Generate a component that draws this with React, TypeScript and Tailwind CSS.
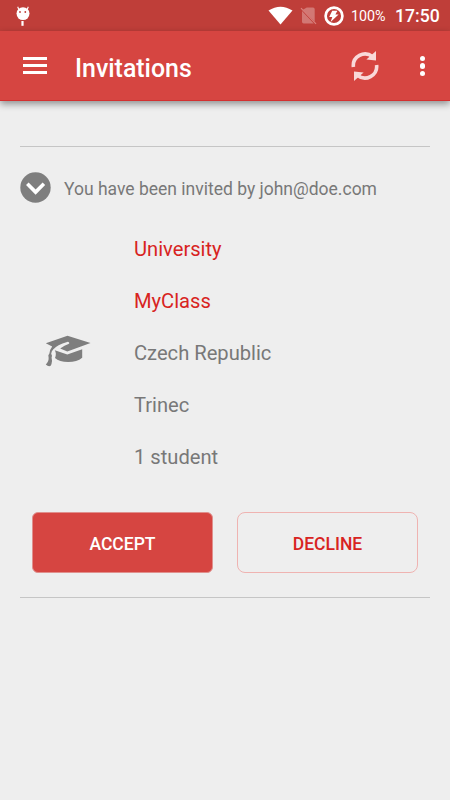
const StatusBar = () => {
  return (
    <div className="flex h-[31px] items-center bg-[#bf3e39] pr-[10px] pl-4 text-white">
      <svg width="14" height="20" viewBox="0 0 14 20" fill="currentColor">
        <path
          d="M2.8 3.5 1.7.8M11.2 3.5 12.3.8"
          stroke="currentColor"
          strokeWidth="1.1"
        />
        <ellipse cx="7" cy="7.6" rx="6.5" ry="6.4" />
        <rect x="5.4" y="15" width="2.2" height="4.8" />
        <circle cx="4" cy="6" r=".9" fill="#bf3e39" />
        <circle cx="9.3" cy="6" r=".9" fill="#bf3e39" />
      </svg>
      <div className="ml-auto flex items-center">
        <svg width="25" height="19" viewBox="0 0 25 19" fill="currentColor">
          <path d="M.5 4.6Q12.5-3.2 24.5 4.6L12.5 18.6Z" />
        </svg>
        <svg className="ml-[7px]" width="17" height="19" viewBox="0 0 17 19">
          <path
            d="M6.8 1.5H13q1.7 0 1.7 1.7v12.2L2.8 3.8ZM2 5v10.8q0 1.7 1.7 1.7h10.1Z"
            fill="#fff"
            opacity=".3"
          />
          <path d="m1 2.2 15 15.6" stroke="#d9807c" strokeWidth="1.2" />
        </svg>
        <svg className="ml-[7px]" width="20" height="20" viewBox="0 0 20 20">
          <circle
            cx="10"
            cy="10"
            r="8.4"
            fill="none"
            stroke="#fff"
            strokeWidth="2.7"
          />
          <path d="M8.2 4.8h5.2l-2 3.6h3.2L6.6 16l1.7-4.9H5.2Z" fill="#fff" />
        </svg>
        <span className="ml-[7px] w-9 pt-0.5 text-[14.3px] leading-none">
          100%
        </span>
        <span className="ml-2 w-[45px] pt-[3px] text-[17.6px] leading-none font-medium">
          17:50
        </span>
      </div>
    </div>
  );
};

const Header = () => {
  return (
    <header className="flex h-[70px] items-center border-b border-[#d32f2f] bg-[#d64541] pl-[23px] text-white shadow-[0_3px_7px_rgba(0,0,0,0.4)]">
      <div className="flex w-6 flex-col gap-1">
        <div className="h-[3px] bg-white" />
        <div className="h-[3px] bg-white" />
        <div className="h-[3px] bg-white" />
      </div>
      <h1 className="ml-7 pt-1.5 text-[24.9px] leading-8 font-medium">
        Invitations
      </h1>
      <svg
        className="mt-px ml-auto"
        width="28"
        height="32"
        viewBox="0 0 28 32"
        fill="#f9d9d9"
      >
        <g fill="none" stroke="#f9d9d9" strokeWidth="3.6">
          <path d="M2.4 17A11.7 11.7 0 0 1 21.5 6.7" />
          <path d="M25.6 15A11.7 11.7 0 0 1 6.5 25.3" />
        </g>
        <path d="M25 1v9.5L15.4 9.5Z" />
        <path d="M3 31v-9.5l9.6 1Z" />
      </svg>
      <div className="mt-px mr-[25px] ml-[41px] flex flex-col gap-[2.3px]">
        <div className="size-[5.2px] rounded-full bg-white" />
        <div className="size-[5.2px] rounded-full bg-white" />
        <div className="size-[5.2px] rounded-full bg-white" />
      </div>
    </header>
  );
};

const Invitation = () => {
  return (
    <section className="mx-5 mt-[45px] h-[452px] border-y border-[#c5c5c5]">
      <div className="flex h-14 items-center pt-[25px]">
        <svg width="31" height="31" viewBox="0 0 31 31">
          <circle cx="15.5" cy="15.5" r="15.2" fill="#7e7e7e" />
          <path
            d="m7.3 11.8 8.3 8.3 8.3-8.3"
            fill="none"
            stroke="#fff"
            strokeWidth="3.6"
          />
        </svg>
        <p className="ml-[13px] pt-0.5 text-[17.5px] leading-6 whitespace-nowrap">
          You have been invited by john@doe.com
        </p>
      </div>

      <div className="mt-5 flex items-center">
        <svg
          className="mr-[43px] mb-1 ml-[25px]"
          width="46"
          height="32"
          viewBox="0 0 46 32"
          fill="#7e7e7e"
        >
          <path d="M.8 8.2 22.5.8 45.5 8 22.3 16.6 15.2 13.6q4.5-3.3 8.3-4.5 1.2-.6.6-1.7-.8-.9-2-.5Q12.2 9.6 8.1 14.5q-1.7 1.9-1.9 4.2 1.4 1.9.4 3.9.9 4.1-.1 6.3-.5 2.3-2.2 2.3-1.8-.3-3.5-1.8 3.3-3.7 2.8-7-.9-2.1.8-3.800.3-3.9 2.8-7Z" />
          <path d="M9.8 15.3 22.3 19.5 37.2 14.2v8.5q-5.3 4.4-14 4.4-8.9 0-13.2-4Q11.8 18.6 9.8 15.3Z" />
        </svg>
        <ul className="text-[20.15px] leading-[52px]">
          <li className="text-[#d82321]">University</li>
          <li className="text-[#d82321]">MyClass</li>
          <li>Czech Republic</li>
          <li>Trinec</li>
          <li>1 student</li>
        </ul>
      </div>

      <div className="mt-[29px] flex gap-6 px-3 text-[17.5px] font-medium">
        <button className="h-[61px] w-[181px] rounded-md border border-[#e0908d] bg-[#d64541] pt-[3px] text-white">
          ACCEPT
        </button>
        <button className="h-[61px] w-[181px] rounded-lg border border-[#efb3b1] pt-[3px] text-[#d82321]">
          DECLINE
        </button>
      </div>
    </section>
  );
};

const App = () => {
  return (
    <div className="min-h-screen overflow-hidden bg-[#eeeeee] font-['Roboto',sans-serif] text-[#787878]">
      <StatusBar />
      <Header />
      <Invitation />
    </div>
  );
};

export default App;
